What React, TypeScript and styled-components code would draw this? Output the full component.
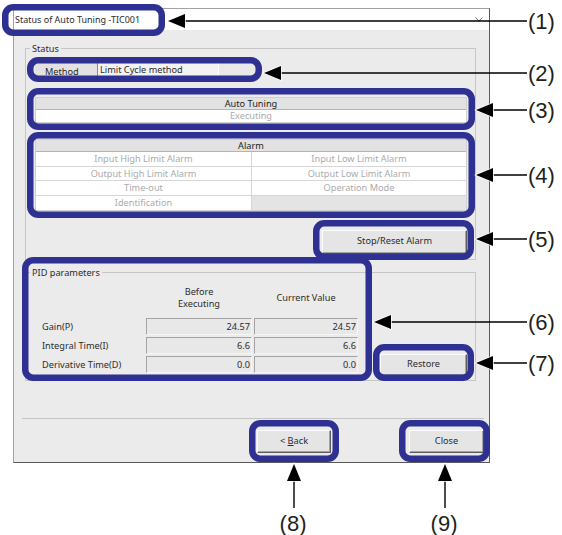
import styled, { createGlobalStyle } from "styled-components";

const BLUE = "#2e3192";

const GlobalStyle = createGlobalStyle`
  html, body {
    margin: 0;
    padding: 0;
    background: #ffffff;
  }
  body {
    font-family: "Noto Sans", "Liberation Sans", sans-serif;
  }
`;

const Figure = styled.div`
  position: relative;
  width: 562px;
  height: 535px;
  box-sizing: border-box;
  padding: 8px 0 0 13px;
  overflow: hidden;
`;

const Dialog = styled.div`
  width: 477px;
  height: 455px;
  box-sizing: border-box;
  display: flex;
  flex-direction: column;
  border: 1px solid #a2a2a2;
  border-right-color: #5a5a5a;
  border-bottom-color: #5a5a5a;
  background: #ebebeb;
  color: #2b2b2b;
  font-size: 9.2px;
`;

const TitleBar = styled.div`
  height: 21px;
  flex-shrink: 0;
  display: flex;
  align-items: center;
  justify-content: space-between;
  padding: 0 6px 0 1px;
  background: #ffffff;
  font-size: 9px;
`;

const Body = styled.div`
  flex: 1;
  display: flex;
  flex-direction: column;
  padding: 12px 0 9px;
`;

const Group = styled.fieldset`
  margin: 0 13px 0 11px;
  padding: 0;
  min-width: 0;
  border: 1px solid #c6c6c6;

  & + & {
    margin-top: 6px;
  }
`;

const Legend = styled.legend`
  margin-left: 4px;
  padding: 0 2px;
  line-height: 13px;
`;

const StatusBody = styled.div`
  display: flex;
  flex-direction: column;
  align-items: flex-start;
  padding: 8px 8px 5px 9px;
`;

const MethodRow = styled.div`
  display: flex;
  width: 220px;
  height: 15px;
  margin-bottom: 19px;
`;

const MethodLabel = styled.div`
  width: 62px;
  box-sizing: border-box;
  padding: 3px 0 0 10px;
  line-height: 12px;
  background: #e2e2e2;
`;

const MethodValue = styled.div`
  width: 121px;
  box-sizing: border-box;
  padding: 1px 0 0 2px;
  line-height: 12px;
  border-left: 1px solid #8a8a8a;
  background: #f3f3f3;
`;

const MethodBlank = styled.div`
  flex: 1;
  border-left: 1px solid #ffffff;
  background: #e9e9e9;
`;

const Table = styled.div<{ $columns: number }>`
  align-self: stretch;
  display: grid;
  grid-template-columns: repeat(${(p) => p.$columns}, 1fr);
  border: 1px solid #d0d0d0;
  background: #ffffff;
  text-align: center;

  & + & {
    margin-top: 16px;
  }
`;

const HeaderCell = styled.div`
  grid-column: 1 / -1;
  height: 11px;
  line-height: 11px;
  background: #e2e2e2;
  border-bottom: 1px solid #b4b4b4;
  color: #222222;
`;

const Cell = styled.div<{ $h: number; $divider?: boolean; $blank?: boolean; $last?: boolean }>`
  height: ${(p) => p.$h}px;
  line-height: ${(p) => p.$h}px;
  color: #ababab;
  background: ${(p) => (p.$blank ? "#e4e4e4" : "#ffffff")};
  border-left: ${(p) => (p.$divider ? "1px solid #d6d6d6" : "none")};
  border-bottom: ${(p) => (p.$last ? "none" : "1px solid #d6d6d6")};
`;

const PushButton = styled.button<{ $w: number; $h: number }>`
  width: ${(p) => p.$w}px;
  height: ${(p) => p.$h}px;
  flex-shrink: 0;
  padding: 0 0 2px;
  font-family: inherit;
  font-size: 9.2px;
  line-height: 12px;
  color: #2b2b2b;
  background: #e5e5e5;
  border: 1px solid;
  border-color: #fbfbfb #5c5c5c #5c5c5c #fbfbfb;
  box-shadow: inset -1px -1px 0 #a4a4a4;

  u {
    text-decoration-thickness: 1px;
    text-underline-offset: 1px;
  }
`;

const StopButton = styled(PushButton)`
  align-self: flex-end;
  margin-top: 19px;
`;

const PidBody = styled.div`
  display: flex;
  align-items: flex-end;
  justify-content: space-between;
  padding: 7px 8px 4px 16px;
`;

const PidGrid = styled.div`
  display: grid;
  grid-template-columns: 102px 106px 104px;
  grid-template-rows: 30px repeat(3, 17px);
  column-gap: 2px;
  row-gap: 2px;
  margin-bottom: 3px;
  align-items: center;
`;

const ColumnHead = styled.div`
  align-self: start;
  height: 24px;
  display: flex;
  align-items: center;
  justify-content: center;
  text-align: center;
  line-height: 12px;
`;

const RowLabel = styled.div`
  line-height: 17px;
`;

const Field = styled.div`
  height: 17px;
  box-sizing: border-box;
  padding-right: 1px;
  line-height: 15px;
  text-align: right;
  background: #e8e8e8;
  border: 1px solid;
  border-color: #a4a4a4 #f6f6f6 #f6f6f6 #a4a4a4;
`;

const Footer = styled.div`
  margin: auto 5px 0 8px;
  padding-top: 11px;
  border-top: 1px solid #c4c4c4;
  display: flex;
  justify-content: flex-end;
  gap: 78px;
`;

const Overlay = styled.svg`
  position: absolute;
  left: 0;
  top: 0;
  width: 562px;
  height: 535px;
  pointer-events: none;
`;

const CalloutNumber = styled.text`
  font-family: "Liberation Sans", Arial, sans-serif;
  font-size: 22px;
  fill: #231f20;
`;

const boxes = [
  { x: 2, y: 4, w: 163, h: 32 },
  { x: 27, y: 57, w: 235, h: 25 },
  { x: 27, y: 88, w: 448, h: 42 },
  { x: 27, y: 132, w: 448, h: 86 },
  { x: 313, y: 220, w: 161, h: 40 },
  { x: 22, y: 257, w: 350, h: 124 },
  { x: 373, y: 344, w: 101, h: 37 },
  { x: 249, y: 420, w: 90, h: 42 },
  { x: 399, y: 420, w: 91, h: 42 },
];

const sideArrows = [
  { n: 1, tip: 168, y: 21 },
  { n: 2, tip: 264, y: 73 },
  { n: 3, tip: 476, y: 110 },
  { n: 4, tip: 476, y: 175 },
  { n: 5, tip: 476, y: 239 },
  { n: 6, tip: 374, y: 322 },
  { n: 7, tip: 476, y: 363 },
];

const upArrows = [
  { n: 8, x: 294 },
  { n: 9, x: 445 },
];

const alarms = [
  ["Input High Limit Alarm", "Input Low Limit Alarm"],
  ["Output High Limit Alarm", "Output Low Limit Alarm"],
  ["Time-out", "Operation Mode"],
  ["Identification", ""],
];

const pidRows = [
  { label: "Gain(P)", before: "24.57", current: "24.57" },
  { label: "Integral Time(I)", before: "6.6", current: "6.6" },
  { label: "Derivative Time(D)", before: "0.0", current: "0.0" },
];

function Annotations() {
  return (
    <Overlay viewBox="0 0 562 535">
      {boxes.map((b, i) => (
        <rect
          key={i}
          x={b.x + 3.25}
          y={b.y + 3.25}
          width={b.w - 6.5}
          height={b.h - 6.5}
          rx={8}
          fill="none"
          stroke={BLUE}
          strokeWidth={6.5}
        />
      ))}
      {sideArrows.map((a) => (
        <g key={a.n}>
          <line x1={a.tip + 15} y1={a.y} x2={527} y2={a.y} stroke="#000" strokeWidth={1.4} />
          <polygon
            points={`${a.tip},${a.y} ${a.tip + 17},${a.y - 7} ${a.tip + 17},${a.y + 7}`}
            fill="#000"
            stroke="#fff"
            strokeWidth={1.5}
            paintOrder="stroke"
          />
          <CalloutNumber x={528} y={a.y} dominantBaseline="central">
            ({a.n})
          </CalloutNumber>
        </g>
      ))}
      {upArrows.map((a) => (
        <g key={a.n}>
          <line x1={a.x} y1={478} x2={a.x} y2={508} stroke="#000" strokeWidth={1.4} />
          <polygon
            points={`${a.x},${464} ${a.x - 7},${481} ${a.x + 7},${481}`}
            fill="#000"
            stroke="#fff"
            strokeWidth={1.5}
            paintOrder="stroke"
          />
          <CalloutNumber x={a.x - 1} y={523} dominantBaseline="central" textAnchor="middle">
            ({a.n})
          </CalloutNumber>
        </g>
      ))}
    </Overlay>
  );
}

export default function App() {
  return (
    <>
      <GlobalStyle />
      <Figure>
        <Dialog>
          <TitleBar>
            <span>Status of Auto Tuning -TIC001</span>
            <svg width="8" height="5" viewBox="0 0 8 5">
              <polyline points="0.5,0.5 4,4 7.5,0.5" fill="none" stroke="#7a7a7a" strokeWidth="1" />
            </svg>
          </TitleBar>
          <Body>
            <Group>
              <Legend>Status</Legend>
              <StatusBody>
                <MethodRow>
                  <MethodLabel>Method</MethodLabel>
                  <MethodValue>Limit Cycle method</MethodValue>
                  <MethodBlank />
                </MethodRow>
                <Table $columns={1}>
                  <HeaderCell>Auto Tuning</HeaderCell>
                  <Cell $h={12} $last>
                    Executing
                  </Cell>
                </Table>
                <Table $columns={2}>
                  <HeaderCell>Alarm</HeaderCell>
                  {alarms.map((row, r) =>
                    row.map((text, c) => (
                      <Cell
                        key={`${r}-${c}`}
                        $h={r === alarms.length - 1 ? 14.5 : 13.5}
                        $divider={c === 1}
                        $blank={text === ""}
                        $last={r === alarms.length - 1}
                      >
                        {text}
                      </Cell>
                    ))
                  )}
                </Table>
                <StopButton $w={145} $h={24}>
                  Stop/Reset Alarm
                </StopButton>
              </StatusBody>
            </Group>
            <Group>
              <Legend>PID parameters</Legend>
              <PidBody>
                <PidGrid>
                  <div />
                  <ColumnHead>
                    Before
                    <br />
                    Executing
                  </ColumnHead>
                  <ColumnHead>Current Value</ColumnHead>
                  {pidRows.map((row) => [
                    <RowLabel key={`${row.label}-l`}>{row.label}</RowLabel>,
                    <Field key={`${row.label}-b`}>{row.before}</Field>,
                    <Field key={`${row.label}-c`}>{row.current}</Field>,
                  ])}
                </PidGrid>
                <PushButton $w={87} $h={22}>
                  Restore
                </PushButton>
              </PidBody>
            </Group>
            <Footer>
              <PushButton $w={74} $h={23}>
                &lt; <u>B</u>ack
              </PushButton>
              <PushButton $w={75} $h={23}>
                Close
              </PushButton>
            </Footer>
          </Body>
        </Dialog>
        <Annotations />
      </Figure>
    </>
  );
}
